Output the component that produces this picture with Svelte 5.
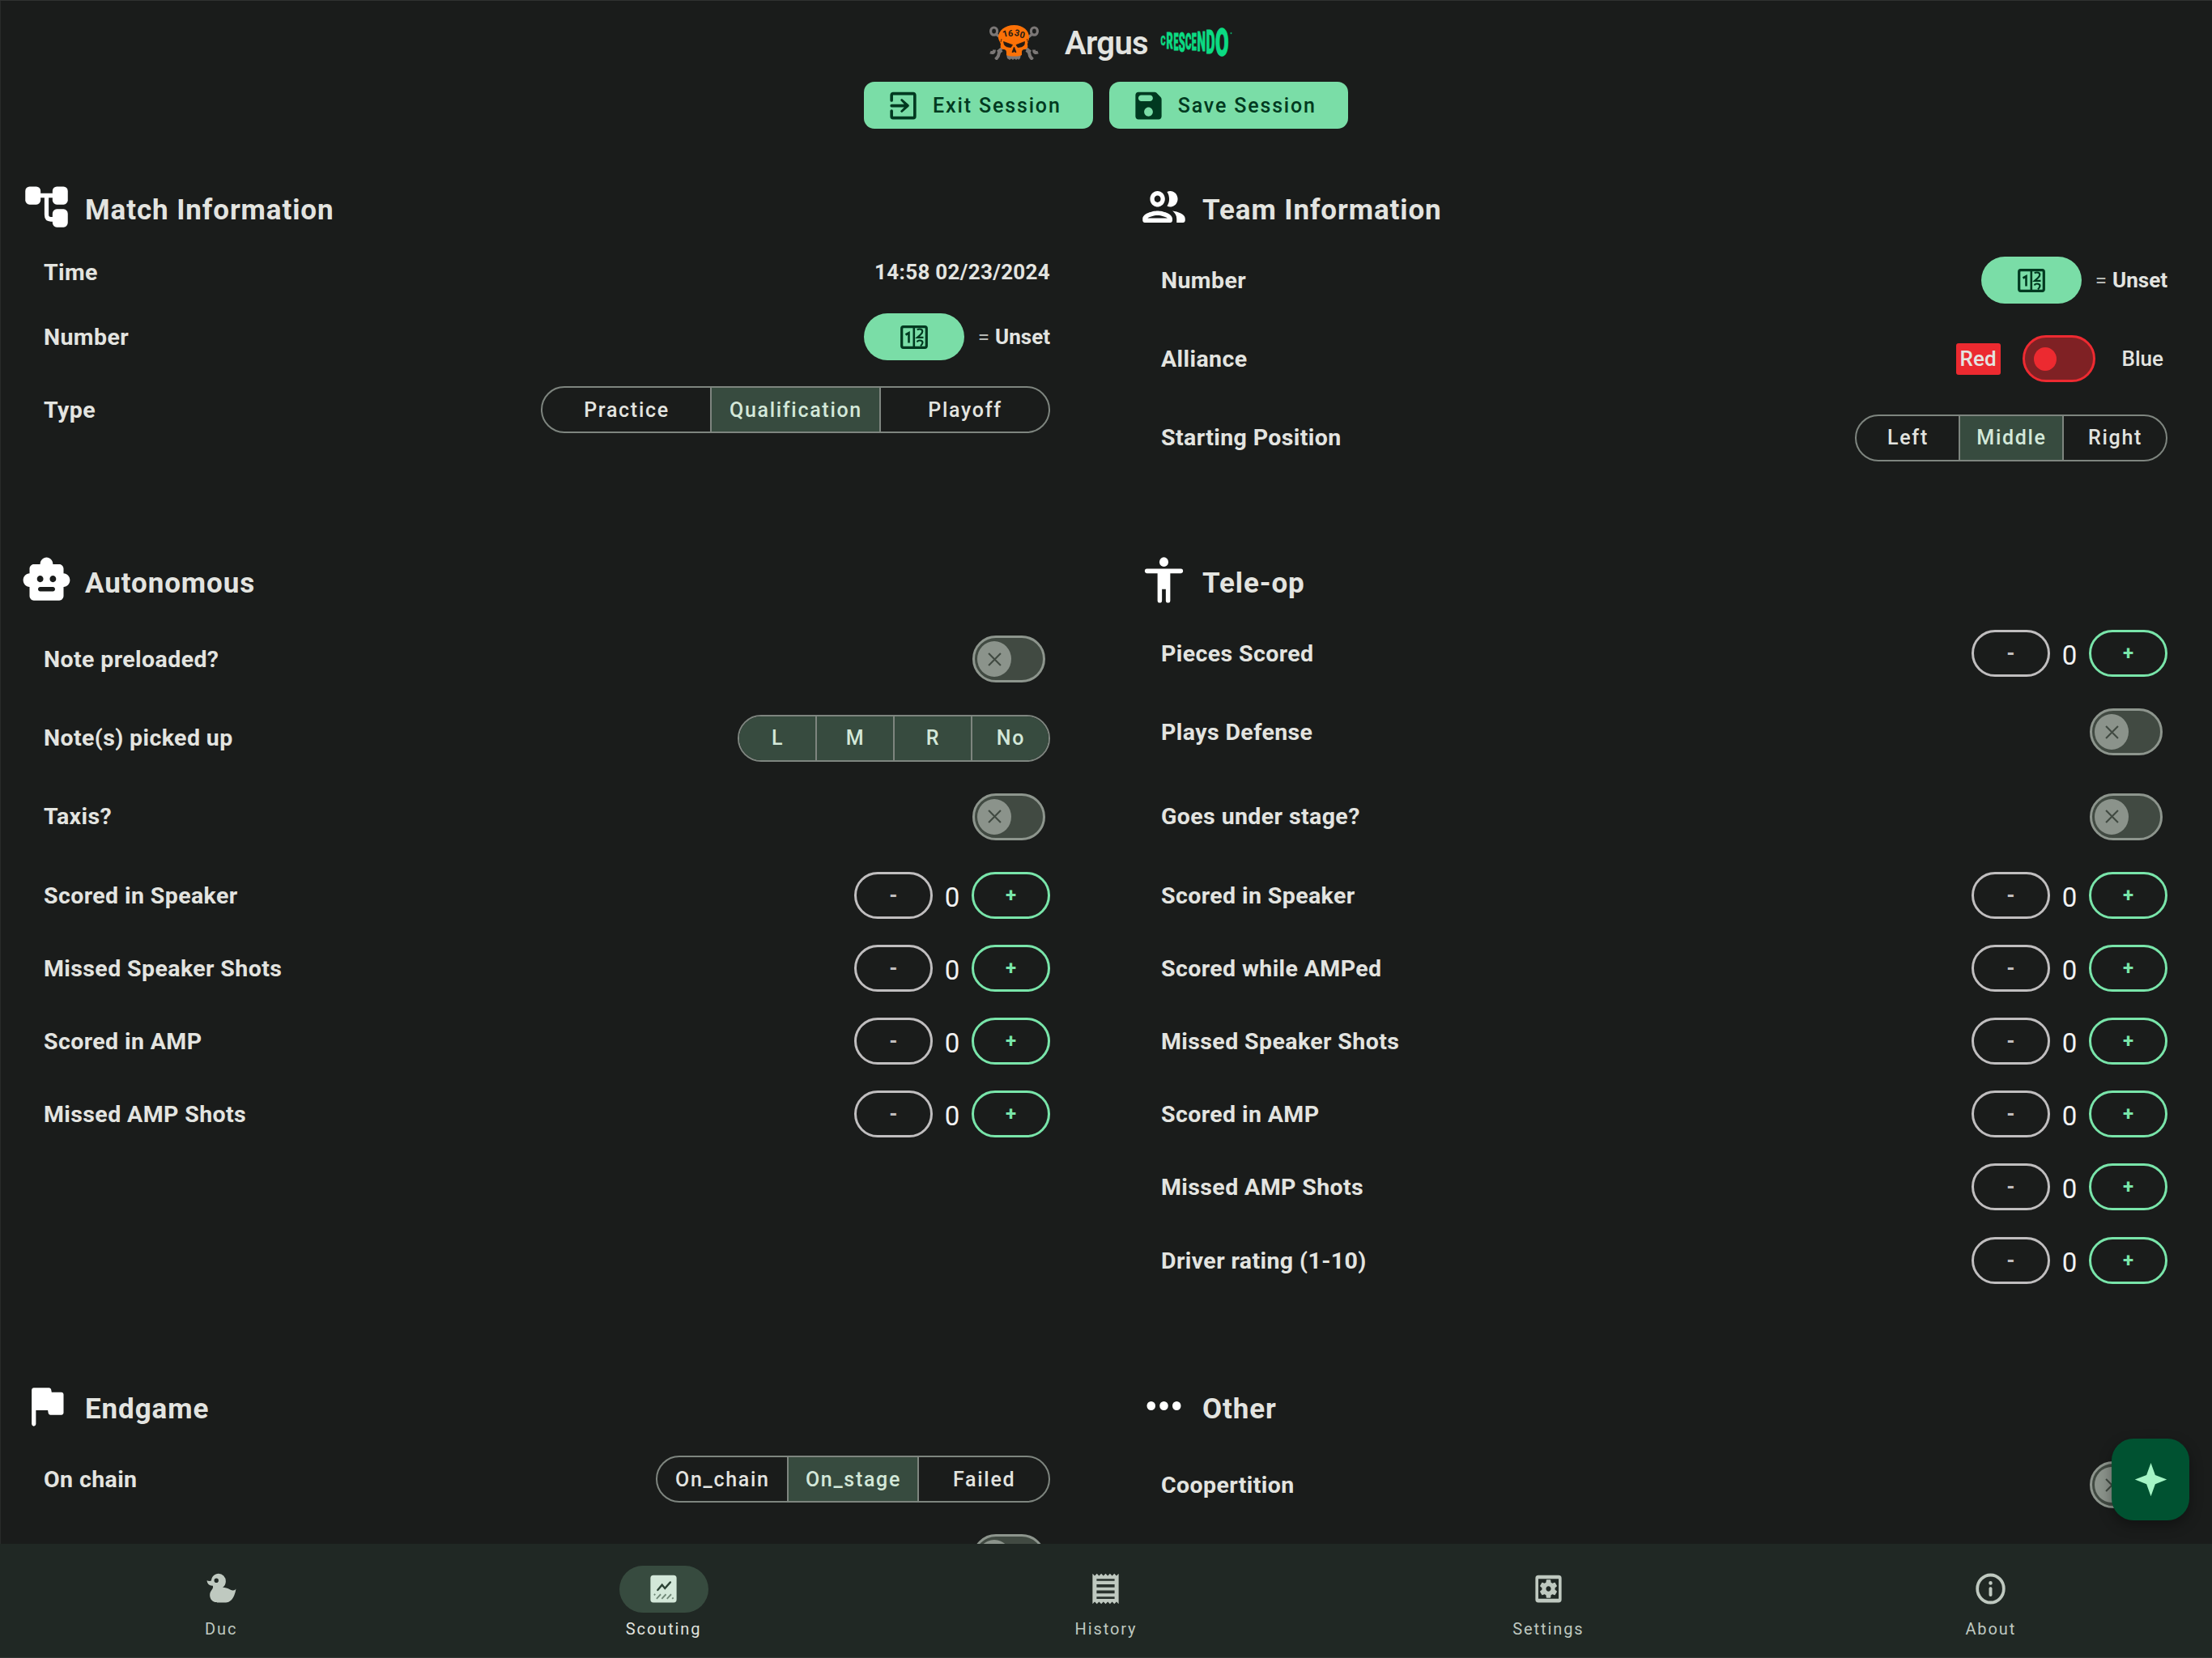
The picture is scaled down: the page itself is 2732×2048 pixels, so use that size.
<script>
  const sections = [
    {
      title: 'Match Information',
      icon: 'tree',
      rows: [
        { label: 'Time', type: 'text', value: '14:58 02/23/2024' },
        { label: 'Number', type: 'number' },
        { label: 'Type', type: 'segments', size: 'xl', options: ['Practice', 'Qualification', 'Playoff'], selected: ['Qualification'] }
      ]
    },
    {
      title: 'Team Information',
      icon: 'people',
      rows: [
        { label: 'Number', type: 'number' },
        { label: 'Alliance', type: 'alliance' },
        { label: 'Starting Position', type: 'segments', size: 'md', options: ['Left', 'Middle', 'Right'], selected: ['Middle'] }
      ]
    },
    {
      title: 'Autonomous',
      icon: 'robot',
      rows: [
        { label: 'Note preloaded?', type: 'toggle' },
        { label: 'Note(s) picked up', type: 'segments', size: 'md', options: ['L', 'M', 'R', 'No'], selected: ['L', 'M', 'R', 'No'] },
        { label: 'Taxis?', type: 'toggle' },
        { label: 'Scored in Speaker', type: 'stepper' },
        { label: 'Missed Speaker Shots', type: 'stepper' },
        { label: 'Scored in AMP', type: 'stepper' },
        { label: 'Missed AMP Shots', type: 'stepper' }
      ]
    },
    {
      title: 'Tele-op',
      icon: 'person',
      rows: [
        { label: 'Pieces Scored', type: 'stepper' },
        { label: 'Plays Defense', type: 'toggle' },
        { label: 'Goes under stage?', type: 'toggle' },
        { label: 'Scored in Speaker', type: 'stepper' },
        { label: 'Scored while AMPed', type: 'stepper' },
        { label: 'Missed Speaker Shots', type: 'stepper' },
        { label: 'Scored in AMP', type: 'stepper' },
        { label: 'Missed AMP Shots', type: 'stepper' },
        { label: 'Driver rating (1-10)', type: 'stepper', last: true }
      ]
    },
    {
      title: 'Endgame',
      icon: 'flag',
      rows: [
        { label: 'On chain', type: 'segments', size: 'lg', options: ['On_chain', 'On_stage', 'Failed'], selected: ['On_stage'] },
        { label: '', type: 'toggle' }
      ]
    },
    {
      title: 'Other',
      icon: 'dots',
      rows: [{ label: 'Coopertition', type: 'toggle' }]
    }
  ];

  const tabs = [
    { name: 'Duc', icon: 'duck' },
    { name: 'Scouting', icon: 'chart', active: true },
    { name: 'History', icon: 'receipt' },
    { name: 'Settings', icon: 'gear' },
    { name: 'About', icon: 'info' }
  ];

  // Letters of the season wordmark: x, cap top, width and cap height
  const wordmark = [
    ['C', 0, 11, 6, 12],
    ['R', 7, 8, 8, 19],
    ['E', 15.8, 7, 6, 21.5],
    ['S', 22.2, 6.5, 8, 24],
    ['C', 30.3, 8.5, 7.5, 19],
    ['E', 38.2, 7, 6, 21.5],
    ['N', 44.8, 6, 10.5, 24],
    ['D', 56, 3.5, 11, 29],
    ['O', 67.5, 1.5, 16.5, 34.5]
  ];
  const glyphWidth = { C: 6.5, R: 6.3, E: 5.6, S: 6.2, N: 7, D: 6.4, O: 6.9 };
</script>

{#snippet icon(name)}
  <svg class="icon" viewBox="0 0 24 24" preserveAspectRatio="none" fill="currentColor" fill-rule="evenodd" aria-hidden="true">
    {#if name === 'tree'}
      <rect x="2" y="3" width="7.2" height="8" rx="2" /><rect x="14.8" y="3" width="7.2" height="8" rx="2" /><rect x="14.8" y="13" width="7.2" height="8" rx="2" />
      <path d="M9 7h6M12 7v8.5q0 2 2 2h1.5" fill="none" stroke="currentColor" stroke-width="2" />
    {:else if name === 'people'}
      <path d="M9 13.75c-2.34 0-7 1.17-7 3.5v.75c0 .55.45 1 1 1h12c.55 0 1-.45 1-1v-.75c0-2.33-4.66-3.5-7-3.5zM4.34 17c.84-.58 2.87-1.25 4.66-1.25s3.82.67 4.66 1.25H4.34zM9 12c1.93 0 3.5-1.57 3.5-3.5S10.93 5 9 5 5.5 6.57 5.5 8.5 7.07 12 9 12zm0-5c.83 0 1.5.67 1.5 1.5S9.83 10 9 10s-1.5-.67-1.5-1.5S8.17 7 9 7zm7.04 6.81c1.16.84 1.96 1.96 1.96 3.44V19h3c.55 0 1-.45 1-1v-.75c0-2.02-3.5-3.17-5.96-3.44zM15 12c1.93 0 3.5-1.57 3.5-3.5S16.93 5 15 5c-.54 0-1.04.13-1.5.35.63.89 1 1.98 1 3.15s-.37 2.26-1 3.15c.46.22.96.35 1.5.35z" />
    {:else if name === 'robot'}
      <path d="M20 9V7c0-1.1-.9-2-2-2h-3c0-1.66-1.34-3-3-3S9 3.34 9 5H6c-1.1 0-2 .9-2 2v2c-1.66 0-3 1.34-3 3s1.34 3 3 3v4c0 1.1.9 2 2 2h12c1.1 0 2-.9 2-2v-4c1.66 0 3-1.34 3-3s-1.34-3-3-3zM7.5 11.5c0-.83.67-1.5 1.5-1.5s1.5.67 1.5 1.5S9.83 13 9 13s-1.5-.67-1.5-1.5zM15 17H9c-.55 0-1-.45-1-1s.45-1 1-1h6c.55 0 1 .45 1 1s-.45 1-1 1zm0-4c-.83 0-1.5-.67-1.5-1.5S14.17 10 15 10s1.5.67 1.5 1.5S15.83 13 15 13z" />
    {:else if name === 'person'}
      <circle cx="12" cy="4" r="2.1" />
      <path d="M20 9h-5v12a1 1 0 0 1-2.1 0v-5h-1.8v5a1 1 0 0 1-2.1 0V9H4a1 1 0 0 1 0-2h16a1 1 0 0 1 0 2z" />
    {:else if name === 'flag'}
      <path d="M14.4 6l-.24-1.2c-.09-.46-.5-.8-.98-.8H6c-.55 0-1 .45-1 1v15c0 .55.45 1 1 1s1-.45 1-1v-6h5.600l.24 1.200c.09.47.5.8.98.8H19c.55 0 1-.45 1-1V7c0-.55-.45-1-1-1h-4.600z" />
    {:else if name === 'dots'}
      <circle cx="6" cy="12" r="2" /><circle cx="12" cy="12" r="2" /><circle cx="18" cy="12" r="2" />
    {:else if name === 'exit'}
      <path d="M19,3H5C3.89,3 3,3.89 3,5V8.5a1 1 0 0 0 2 0V5H19V19H5V15.5a1 1 0 0 0-2 0V19A2,2 0 0,0 5,21H19A2,2 0 0,0 21,19V5C21,3.89 20.1,3 19,3M10.08,15.58q.7 1.4 1.42.7L15.8,12.7q.7-.7 0-1.4L11.5,7.7q-.7-.7-1.42.7L12.67,11H4a1 1 0 0 0 0 2H12.67L10.08,15.58Z" />
    {:else if name === 'save'}
      <path d="M17.59 3.59c-.38-.38-.89-.59-1.42-.59H5c-1.11 0-2 .9-2 2v14c0 1.1.9 2 2 2h14c1.1 0 2-.9 2-2V7.83c0-.53-.21-1.04-.59-1.41l-2.82-2.83zM12 19c-1.66 0-3-1.34-3-3s1.34-3 3-3 3 1.34 3 3-1.34 3-3 3zm1-10H7c-1.1 0-2-.9-2-2s.9-2 2-2h6c1.1 0 2 .9 2 2s-.9 2-2 2z" />
    {:else if name === 'duck'}
      <path d="M8.5,5A1.5,1.5 0 0,0 7,6.5A1.5,1.5 0 0,0 8.5,8A1.5,1.5 0 0,0 10,6.5A1.5,1.5 0 0,0 8.5,5M10,2A5,5 0 0,1 15,7C15,8.7 14.15,10.2 12.86,11.1C14.44,11.25 16.22,11.61 18,12.5C21,14 22,12 22,12C22,12 21,21 15,21H9C9,21 4,21 4,16C4,13 7,12 6,10C2,10 2,6.5 2,6.5C3,7 4.24,7 5,6.65C5.19,4.05 7.36,2 10,2Z" />
    {:else if name === 'chart'}
      <rect x="3" y="3" width="18" height="18" rx="2" />
      <path class="mark" d="M8 12.8l3-3.4 2 2.3 3.7-4" fill="none" stroke-width="1.3" stroke-linecap="round" />
      <path class="hatch" d="M7.2 18.6l2.9-3M10.8 18.6l2.9-3M14.4 18.6l2.9-3M5.5 16.2l.8-.7M18 18.6l.8-.7" fill="none" stroke-width="1" />
    {:else if name === 'receipt'}
      <path d="M19.5 3.5L18 2l-1.5 1.5L15 2l-1.5 1.5L12 2l-1.5 1.5L9 2 7.5 3.5 6 2 4.5 3.5 3 2v20l1.5-1.5L6 22l1.5-1.5L9 22l1.5-1.5L12 22l1.5-1.5L15 22l1.5-1.5L18 22l1.5-1.5L21 22V2l-1.5 1.5z" />
      <path class="cut" d="M5.8 5.4h12.4v1.4H5.8zM5.8 9h12.4v2H5.8zM5.8 13h12.4v2H5.8zM5.8 17.2h12.4v1.4H5.8z" />
    {:else if name === 'gear'}
      <path d="M19 3H5a2 2 0 0 0-2 2v14a2 2 0 0 0 2 2h14a2 2 0 0 0 2-2V5a2 2 0 0 0-2-2zm0 15.5H5V5.5h14v13z" />
      <path d="M6.21 13.97l1.2 2.07c.08.13.23.18.37.13l1.49-.6c.31.24.64.44 1.01.59l.22 1.59c.03.14.15.25.3.25h2.4c.15 0 .27-.11.3-.26l.22-1.59c.36-.15.7-.35 1.01-.59l1.49.6c.14.05.29 0 .37-.13l1.2-2.07c.08-.13.04-.29-.07-.39l-1.27-.99c.03-.19.04-.39.04-.58 0-.2-.02-.39-.04-.59l1.27-.99c.11-.09.15-.26.07-.39l-1.2-2.07c-.08-.13-.23-.18-.37-.13l-1.49.6c-.31-.24-.64-.44-1.01-.59l-.22-1.59c-.03-.14-.15-.25-.3-.25h-2.4c-.15 0-.27.11-.3.26l-.22 1.59c-.36.15-.71.34-1.01.58l-1.49-.6c-.14-.05-.29 0-.37.13l-1.2 2.07c-.08.13-.04.29.07.39l1.27.99c-.03.2-.05.39-.05.59 0 .2.02.39.04.59l-1.27.99c-.11.1-.14.26-.06.39zM12 10.29c.94 0 1.71.77 1.71 1.71s-.77 1.71-1.71 1.71-1.71-.77-1.71-1.71.77-1.71 1.71-1.71z" />
    {:else if name === 'info'}
      <circle cx="12" cy="12" r="9.1" fill="none" stroke="currentColor" stroke-width="2.1" />
      <circle cx="12" cy="8.2" r="1.25" /><rect x="10.9" y="10.8" width="2.2" height="6.2" rx="1" />
    {:else if name === 'star'}
      <path d="M12,1L9,9L1,12L9,15L12,23L15,15L23,12L15,9L12,1Z" />
    {/if}
  </svg>
{/snippet}

{#snippet numberButton()}
  <button class="number-button" aria-label="Pick number">
    <svg class="digits" viewBox="0 0 34 29" aria-hidden="true">
      <rect x="1.7" y="1.7" width="30.6" height="25.6" rx="2" fill="none" stroke="currentColor" stroke-width="3.2" />
      <g fill="none" stroke="currentColor" stroke-width="2.6">
        <path d="M16.8 2v25" />
        <path d="M6.500 11.500l4-2.200V21.500" />
        <path d="M20.800 5.500q1-1 3-1 3.500 0 3.500 2.800 0 2-2.500 4.200l-3.800 3.300h7.500" stroke-width="2.2" />
        <path d="M20.800 20.500q.5-2 3.200-2 3.500 0 3.500 2.600 0 1.900-2.500 4.400" stroke-width="2.2" />
      </g>
    </svg>
  </button>
  <span class="equals">=</span><span class="value">Unset</span>
{/snippet}

<div class="app">
  <main>
    <header>
      <div class="brand">
        <svg class="skull" viewBox="0 0 61 43" aria-hidden="true">
          <g fill="none" stroke="#7b7776" stroke-width="3.2">
            <ellipse cx="5.6" cy="7.6" rx="4" ry="4.6" /><ellipse cx="55.4" cy="7.6" rx="4" ry="4.6" />
            <path d="M8 11l5 4M53 11l-5 4M16 28l-6 5M45 28l6 5" />
            <path d="M1 33.5q5 2 5-3M15.5 31q-4 2-4 5t-4 6.500M60 33.5q-5 2-5-3M45.5 31q4 2 4 5t4 6.500" stroke-width="4" />
          </g>
          <path d="M21 36h18l-1 5-2 2-1-1.5-2 1.500-2-1.500-2 1.500-2-1.500-2 1.500-3-2z" fill="#7b7776" />
          <path d="M30.500 0C42 0 49 7 49 15c0 4-2 6-2 9 1 3 0 5-3 6-3 0-4 1-4 4v3q-3 1.500-9.500 1.500T21 37v-3c0-3-1-4-4-4-3-1-4-3-3-6 0-3-3-5-3-9C11 7 19 0 30.500 0z" fill="#fb7107" />
          <path d="M17.500 20.500l11 4-2 3q-6 0-8-3zM43.500 20.500l-10.500 4 2 3q6 0 8-3zM30.500 27l2.500 6.500h-1.500l-1-1.500-1 1.500H28zM15 17l-1 4M46.500 17l1 4" fill="#231a14" stroke="#231a14" stroke-width=".8" />
          <g class="team"><text x="17" y="15" transform="rotate(-14 17 14)">1</text><text x="23" y="14">6</text><text x="30.500" y="13" transform="rotate(12 31 12)">3</text><text x="37" y="15" transform="rotate(14 37 14)">0</text></g>
        </svg>
        <h1>Argus</h1>
        <svg class="season" viewBox="0 0 88 38">
          {#each wordmark as [letter, x, top, width, height]}
            <text transform="translate({x - 0.4} {top + height}) scale({width / glyphWidth[letter]} {height / 7.11})">{letter}</text>
          {/each}
          <circle cx="86.500" cy="8" r=".8" />
        </svg>
      </div>
      <div class="actions">
        <button class="action">{@render icon('exit')}<span>Exit Session</span></button>
        <button class="action">{@render icon('save')}<span>Save Session</span></button>
      </div>
    </header>

    <div class="sections">
      {#each sections as section}
        <section>
          <div class="heading">
            {@render icon(section.icon)}
            <h2>{section.title}</h2>
          </div>
          {#each section.rows as row}
            <div class="row {row.type}" class:last={row.last}>
              <span class="label">{row.label}</span>
              {#if row.type === 'text'}
                <span class="value time">{row.value}</span>
              {:else if row.type === 'number'}
                <div class="control">{@render numberButton()}</div>
              {:else if row.type === 'segments'}
                <div class="segmented {row.size}">
                  {#each row.options as option}
                    <button class:selected={row.selected.includes(option)}>{option}</button>
                  {/each}
                </div>
              {:else if row.type === 'toggle'}
                <div class="switch">
                  <span class="thumb"><svg viewBox="0 0 16 16"><path d="M1 1l14 14M15 1L1 15" /></svg></span>
                </div>
              {:else if row.type === 'stepper'}
                <div class="control">
                  <button class="step minus">-</button>
                  <span class="count">0</span>
                  <button class="step plus">+</button>
                </div>
              {:else}
                <div class="control">
                  <span class="side red">Red</span>
                  <div class="switch alliance-switch"><span class="thumb"></span></div>
                  <span class="side">Blue</span>
                </div>
              {/if}
            </div>
          {/each}
        </section>
      {/each}
    </div>
    <button class="fab" aria-label="Quick action">{@render icon('star')}</button>
  </main>

  <nav>
    {#each tabs as tab}
      <a href="#{tab.name}" class:active={tab.active}>
        <span class="pill">{@render icon(tab.icon)}</span>
        <span>{tab.name}</span>
      </a>
    {/each}
  </nav>
</div>

<style>
  :global(body) {
    background: #1a1c1b;
  }
  .app {
    box-sizing: border-box;
    width: 2732px;
    height: 2048px;
    display: flex;
    flex-direction: column;
    background: #1a1c1b;
    box-shadow: inset 0 1px #303231, inset 1px 0 #282a29;
    color: #e3e4e0;
    font-family: Roboto, 'Noto Sans', sans-serif;
    overflow: hidden;
  }
  main {
    position: relative;
    height: 1907px;
    overflow: hidden;
  }
  button {
    font: inherit;
    color: inherit;
    border: 0;
    padding: 0;
    background: none;
  }
  .icon {
    width: 43px;
    height: 45px;
    flex: none;
    display: block;
  }

  header {
    height: 217px;
    display: flex;
    flex-direction: column;
    align-items: center;
  }
  .brand {
    display: flex;
    align-items: center;
    height: 101px;
    padding-left: 12px;
  }
  .skull {
    width: 61px;
    height: 43px;
    margin-top: 4px;
  }
  .team {
    font: 700 11px Roboto, sans-serif;
    fill: #231a14;
  }
  h1 {
    margin: 6px 17px 0 32px;
    width: 102px;
    font-size: 40px;
    font-weight: 600;
    letter-spacing: -0.7px;
    line-height: 1;
  }
  .season {
    width: 88px;
    height: 38px;
    overflow: visible;
    font: 900 10px Roboto, sans-serif;
    fill: #0bdb83;
    stroke: #0bdb83;
    stroke-width: 0.3px;
    margin-top: 2px;
  }
  .actions {
    display: flex;
    gap: 20px;
  }
  .action {
    box-sizing: border-box;
    height: 58px;
    display: flex;
    align-items: center;
    gap: 15px;
    padding: 0 39px 0 27px;
    border-radius: 13px;
    background: #7adda7;
    color: #003920;
    font-size: 25px;
    font-weight: 500;
    letter-spacing: 1.85px;
  }

  .sections {
    display: grid;
    grid-template-columns: 1380px 1fr;
    grid-template-rows: 461px 1020px 400px;
  }
  section {
    width: 1297px;
  }
  .heading {
    height: 84px;
    box-sizing: border-box;
    padding: 5px 0 0 26px;
    display: flex;
    align-items: flex-start;
    gap: 16px;
    color: #fff;
  }
  .heading .icon {
    width: 63px;
    height: 67px;
  }
  h2 {
    margin: 19px 0 0;
    font-size: 35px;
    line-height: 38px;
    font-weight: 700;
    letter-spacing: 0.9px;
    color: #e3e4e0;
  }

  .row {
    height: 90px;
    padding-left: 54px;
    display: flex;
    align-items: center;
    justify-content: space-between;
  }
  .row.text {
    height: 70px;
  }
  .row.toggle,
  .row.alliance {
    height: 104.5px;
  }
  .row.last {
    height: 92px;
  }
  .label {
    font-size: 28.5px;
    font-weight: 700;
    letter-spacing: 0.4px;
  }
  .control {
    display: flex;
    align-items: center;
  }
  .value {
    font-size: 26px;
    font-weight: 700;
  }
  .time {
    letter-spacing: 0.3px;
  }
  .equals {
    font-size: 26px;
    color: #b5b8b4;
    margin: 0 7px 0 17px;
  }
  .number-button {
    width: 124px;
    height: 58px;
    border-radius: 29px;
    background: #7adda7;
    color: #003920;
    display: grid;
    place-items: center;
  }
  .digits {
    width: 34px;
    height: 29px;
  }

  .segmented {
    box-sizing: border-box;
    height: 58px;
    display: flex;
    border: 2px solid #7e857f;
    border-radius: 29px;
    overflow: hidden;
  }
  .xl {
    width: 629px;
  }
  .lg {
    width: 487px;
  }
  .md {
    width: 386px;
  }
  .segmented button {
    flex: 1 1 0;
    min-width: 0;
    padding-left: 1px;
    font-size: 25px;
    font-weight: 500;
    letter-spacing: 1.7px;
    text-align: center;
  }
  .segmented button + button {
    border-left: 2px solid #7e857f;
  }
  .segmented .selected {
    background: #374b3f;
    color: #d3e8d9;
  }

  .switch {
    box-sizing: border-box;
    width: 90px;
    height: 58px;
    margin-right: 6px;
    padding-left: 3px;
    display: flex;
    align-items: center;
    border: 3.5px solid #8d958d;
    border-radius: 29px;
    background: #414a42;
  }
  .thumb {
    width: 42px;
    height: 44px;
    border-radius: 50%;
    background: #8b938b;
    display: grid;
    place-items: center;
  }
  .thumb svg {
    width: 17px;
    height: 17px;
    fill: none;
    stroke: #414a42;
    stroke-width: 2;
  }
  .alliance-switch {
    margin: 0 28px 0 27px;
    padding-left: 11px;
    border-color: #ee2a31;
    background: #7f2124;
  }
  .alliance-switch .thumb {
    width: 28px;
    height: 29px;
    background: #ec2a30;
  }
  .side {
    padding: 0 5px;
    line-height: 39px;
    border-radius: 3px;
    font-size: 26px;
    font-weight: 500;
  }
  .red {
    background: #ec2a30;
  }

  .step {
    box-sizing: border-box;
    width: 97px;
    height: 58px;
    border: 3.5px solid #c0bebf;
    border-radius: 29px;
    color: #c0bebf;
    font-size: 24px;
    font-weight: 700;
  }
  .minus {
    font-weight: 900;
  }
  .plus {
    border-color: #79e5aa;
    color: #79e5aa;
  }
  .count {
    width: 48px;
    padding-top: 4px;
    text-align: center;
    font-size: 33px;
    color: #f2f2f2;
  }

  .fab {
    position: absolute;
    right: 28px;
    bottom: 29px;
    width: 96px;
    height: 101px;
    border-radius: 27px;
    background: #005231;
    color: #a4f5c5;
    display: grid;
    place-items: center;
    box-shadow: 0 6px 16px rgba(0, 0, 0, 0.35);
  }

  nav {
    box-sizing: border-box;
    height: 141px;
    padding-top: 27px;
    display: grid;
    grid-template-columns: repeat(5, 1fr);
    background: #202824;
    box-shadow: inset 0 -1px #303734;
  }
  nav a {
    display: flex;
    flex-direction: column;
    align-items: center;
    gap: 8px;
    color: #bfc9c0;
    text-decoration: none;
    font-size: 20px;
    line-height: 24px;
    letter-spacing: 1.9px;
  }
  .pill {
    width: 110px;
    height: 58px;
    border-radius: 29px;
    display: grid;
    place-items: center;
  }
  .pill .icon {
    margin-top: -1px;
  }
  .active {
    color: #e1e3df;
  }
  .active .pill {
    background: #374b3f;
    color: #d3e8d9;
  }
  .mark {
    stroke: #2c4335;
  }
  .hatch {
    stroke: #6f8776;
  }
  .cut {
    fill: #29322d;
  }
</style>
